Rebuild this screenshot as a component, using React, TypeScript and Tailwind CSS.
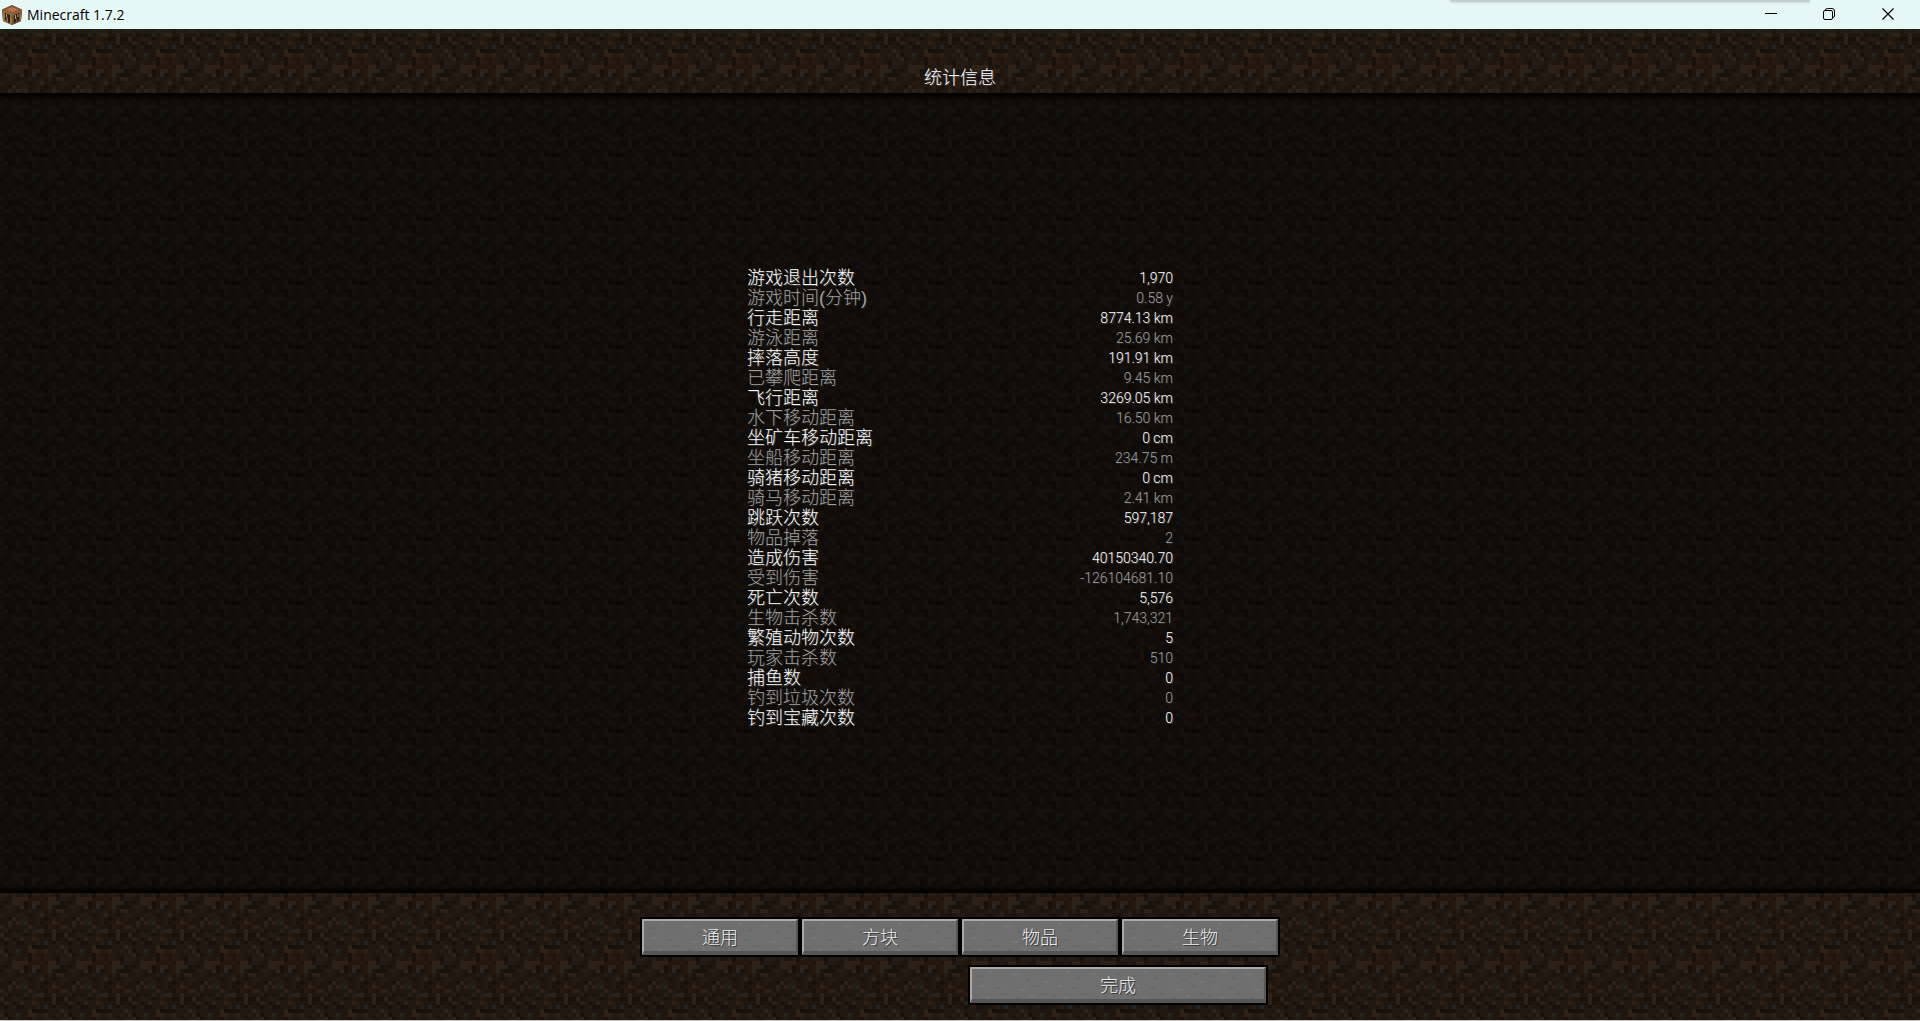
import React from "react";

const DIRT = [
  "bbmbmmbdbbmbbmdb",
  "bmmllllmmmbmllmb",
  "mdmllbdmllmbllgd",
  "dbbmmldmgdmblmdd",
  "mmbmdmmbmmbmbmll",
  "bmmmbbmdmblmmdmb",
  "mmdlmbbmmbmdmbmb",
  "mmlmlbgmmbdmmlbm",
  "lmbmmmmlbmmdbmml",
  "mbdmdmgmbllmmlmm",
  "ldmbbmdmbmmddldd",
  "mgbdmlmmlbmmmldm",
  "mdmbddmmmbmgmdbm",
  "bmmmmmmlddddmmml",
  "ldmmgmmllbblmmbm",
  "bldmbmmdbmmbbmmb",
];
const DIRT_COLORS: Record<string, string> = {
  b: "#251b13",
  m: "#1f1610",
  d: "#18110c",
  l: "#2d2118",
  g: "#1f2427",
};

function DirtTexture({ id, offset, dim }: { id: string; offset: number; dim?: boolean }) {
  return (
    <svg className="absolute inset-0 h-full w-full" aria-hidden="true" shapeRendering="crispEdges">
      <defs>
        <pattern id={id} width="64" height="64" y={offset} patternUnits="userSpaceOnUse">
          {DIRT.flatMap((row, y) =>
            row.split("").map((c, x) => (
              <rect key={x + "-" + y} x={x * 4} y={y * 4} width="4" height="4" fill={DIRT_COLORS[c]} />
            )),
          )}
        </pattern>
      </defs>
      <rect width="100%" height="100%" fill={`url(#${id})`} />
      {dim && <rect width="100%" height="100%" fill="#020201" opacity="0.5" />}
    </svg>
  );
}

const SPECKS = [
  [4, 6, 6, 0], [16, 2, 4, 1], [26, 8, 4, 0], [40, 4, 6, 1], [54, 10, 4, 0], [66, 4, 4, 0],
  [8, 16, 4, 1], [22, 18, 6, 0], [36, 14, 4, 0], [48, 20, 6, 1], [62, 16, 6, 0], [72, 12, 4, 1],
  [2, 26, 4, 0], [14, 28, 4, 1], [30, 24, 6, 0], [44, 28, 4, 0], [58, 26, 4, 1], [70, 24, 6, 0],
];

function StoneTexture({ id }: { id: string }) {
  return (
    <svg className="absolute inset-0 h-full w-full" aria-hidden="true" shapeRendering="crispEdges">
      <defs>
        <pattern id={id} width="78" height="32" patternUnits="userSpaceOnUse">
          {SPECKS.map(([x, y, w, light], i) => (
            <rect key={i} x={x} y={y} width={w} height="2" fill={light ? "#767676" : "#696969"} />
          ))}
        </pattern>
      </defs>
      <rect width="100%" height="100%" fill={`url(#${id})`} />
    </svg>
  );
}

function StoneButton({ label, id, width }: { label: string; id: string; width: string }) {
  return (
    <button type="button" className={`${width} h-10 border-2 border-black bg-[#6f6f6f] text-[#ececec]`}>
      <span className="relative flex h-full items-center justify-center border-t-2 border-r-2 border-b-4 border-l-2 border-t-[#a9a9a9] border-r-[#565656] border-b-[#565656] border-l-[#a9a9a9]">
        <StoneTexture id={id} />
        <span className="relative pt-1 text-lg leading-5 font-light [text-shadow:1px_1px_0_#383838]">{label}</span>
      </span>
    </button>
  );
}

function CraftingTableIcon() {
  return (
    <svg width="20" height="20" viewBox="0 0 20 20" aria-hidden="true">
      <path d="M10 0 20 4.500 19 16 10 20 1 16 0 4.500Z" fill="#5b4023" />
      <path d="M10 .5 19 4.500 10 8 1 4.500Z" fill="#b0693f" />
      <path d="M10 .5 19 4.500 17.500 5 10 2 2.500 5 1 4.500Z" fill="#7d5130" />
      <path d="M7 3.500 11 5.500M10 2.500 14 4.500" stroke="#d08a58" />
      <path d="M0 4.500 10 8.500V20L1 16Z" fill="#8f6d42" />
      <path d="M20 4.500 10 8.500V20L19 16Z" fill="#6b4e2d" />
      <path d="M0 4.500 10 8.500 20 4.500V7L10 11 0 7Z" fill="#8a6540" />
      <path d="M3 8v7l1.500.7V12l1.500.5v5L8 18v-8ZM12 10v8l2-1v-4l1-.5V16l2-1V8Z" fill="#2b2018" />
      <path d="M4.500 9v3M13.500 10v4M16 9v3" stroke="#b39a78" />
      <path d="M1.500 10v5M18.500 9v6M9 12v6" stroke="#a07c4c" />
    </svg>
  );
}

const STATS: [string, string][] = [
  ["游戏退出次数", "1,970"],
  ["游戏时间(分钟)", "0.58 y"],
  ["行走距离", "8774.13 km"],
  ["游泳距离", "25.69 km"],
  ["摔落高度", "191.91 km"],
  ["已攀爬距离", "9.45 km"],
  ["飞行距离", "3269.05 km"],
  ["水下移动距离", "16.50 km"],
  ["坐矿车移动距离", "0 cm"],
  ["坐船移动距离", "234.75 m"],
  ["骑猪移动距离", "0 cm"],
  ["骑马移动距离", "2.41 km"],
  ["跳跃次数", "597,187"],
  ["物品掉落", "2"],
  ["造成伤害", "40150340.70"],
  ["受到伤害", "-126104681.10"],
  ["死亡次数", "5,576"],
  ["生物击杀数", "1,743,321"],
  ["繁殖动物次数", "5"],
  ["玩家击杀数", "510"],
  ["捕鱼数", "0"],
  ["钓到垃圾次数", "0"],
  ["钓到宝藏次数", "0"],
];

export default function App() {
  return (
    <div className="flex h-screen min-h-[760px] flex-col overflow-hidden bg-black font-['Liberation_Sans','Noto_Sans_CJK_SC',sans-serif] text-white">
      <div className="relative flex h-[29px] shrink-0 items-center bg-[#e6f8f6] pl-0.5 text-black">
        <div className="absolute top-0 right-[110px] h-0.5 w-[360px] rounded-b-sm bg-[#c0d0ce] shadow-[0_0_3px_#b0c0be]" />
        <CraftingTableIcon />
        <h1 className="ml-[5px] font-['Open_Sans',sans-serif] text-sm">Minecraft 1.7.2</h1>
        <div className="ml-auto flex h-full pb-px">
          <button type="button" aria-label="最小化" className="flex w-[58px] items-center justify-center">
            <svg width="12" height="12" shapeRendering="crispEdges" aria-hidden="true">
              <path d="M0 5.500H12" stroke="#000" />
            </svg>
          </button>
          <button type="button" aria-label="还原" className="flex w-[58px] items-center justify-center">
            <svg width="12" height="12" fill="none" stroke="#000" aria-hidden="true">
              <rect x=".5" y="2.500" width="9" height="9" rx="1.500" />
              <path d="M2.500 2.500V2Q2.500.5 4.500.5H9Q11.500.5 11.500 3V8Q11.500 9.500 9.500 9.500" />
            </svg>
          </button>
          <button type="button" aria-label="关闭" className="mr-[3px] flex w-[59px] items-center justify-center">
            <svg width="12" height="12" stroke="#000" strokeWidth="1.200" aria-hidden="true">
              <path d="M.5.5 11.500 11.500M11.500.5.5 11.500" />
            </svg>
          </button>
        </div>
      </div>

      <header className="relative flex h-16 shrink-0 items-end justify-center pb-[5px]">
        <DirtTexture id="dirt-header" offset={-32} />
        <div className="absolute inset-x-0 top-0 h-1 bg-[#1c2410]/50" />
        <h2 className="relative text-lg leading-5 font-light [text-shadow:1px_1px_0_#3f3f3f]">统计信息</h2>
      </header>

      <main className="relative flex flex-1 items-center justify-center pt-2.5">
        <DirtTexture id="dirt-list" offset={8} dim />
        <div className="absolute inset-x-0 top-0 h-2 bg-linear-to-b from-black to-transparent" />
        <div className="absolute inset-x-0 bottom-0 h-2 bg-linear-to-t from-black to-transparent" />
        <table className="relative w-[426px]">
          <tbody>
            {STATS.map(([name, value]) => (
              <tr
                key={name}
                className="h-5 [text-shadow:1px_1px_0_#3f3f3f] even:text-[#a0a0a0] even:[text-shadow:1px_1px_0_#242424]"
              >
                <th scope="row" className="p-0 text-left align-top text-lg leading-5 font-light">
                  {name}
                </th>
                <td className="p-0 text-right align-top font-['Roboto',sans-serif] text-sm leading-5 font-light">
                  {value}
                </td>
              </tr>
            ))}
          </tbody>
        </table>
      </main>

      <footer className="relative shrink-0 pt-6 pb-[15px]">
        <DirtTexture id="dirt-footer" offset={0} />
        <div className="relative mx-auto w-[640px]">
          <nav className="flex" aria-label="统计分类">
            <StoneButton id="stone-general" label="通用" width="w-40" />
            <StoneButton id="stone-blocks" label="方块" width="w-40" />
            <StoneButton id="stone-items" label="物品" width="w-40" />
            <StoneButton id="stone-mobs" label="生物" width="w-40" />
          </nav>
          <div className="mt-2 flex justify-end pr-3">
            <StoneButton id="stone-done" label="完成" width="w-[300px]" />
          </div>
        </div>
      </footer>
      <div className="h-px shrink-0 bg-[#c8c4c4]" />
    </div>
  );
}
